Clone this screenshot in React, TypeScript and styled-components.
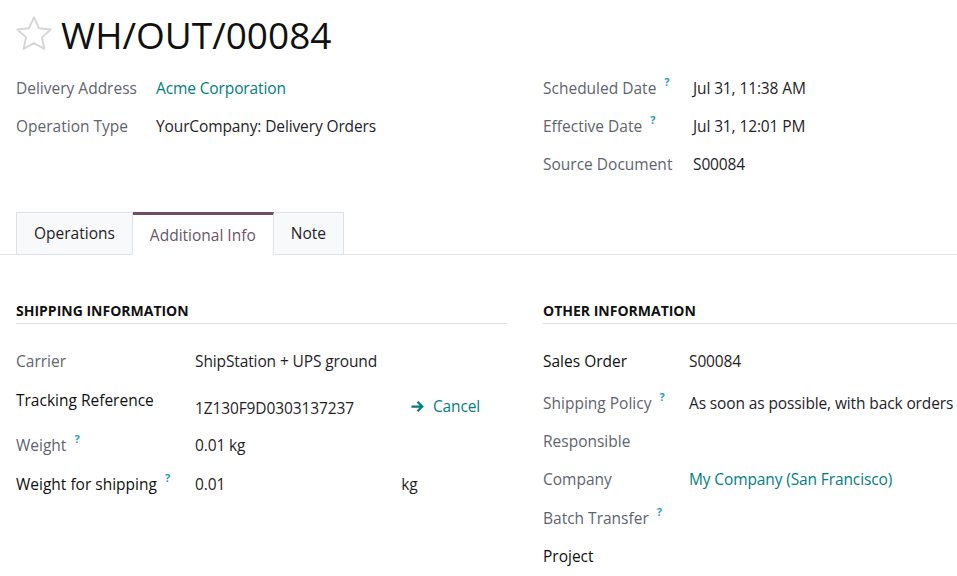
import React from 'react';
import styled, { createGlobalStyle } from 'styled-components';

const TEAL = '#017e84';
const HINT = '#1f9ac4';
const MUTED = '#5f6470';
const INK = '#1f2329';
const BORDER = '#dee2e6';
const BRAND = '#714b67';

const GlobalStyle = createGlobalStyle`
  body {
    margin: 0;
    background: #ffffff;
    color: ${INK};
    font-family: "Open Sans", "Noto Sans", sans-serif;
    font-size: 15.5px;
    overflow: hidden;
  }
`;

const Sheet = styled.div`
  width: 957px;
  height: 576px;
  overflow: hidden;
`;

const TitleRow = styled.div`
  align-items: center;
  display: flex;
  gap: 9px;
  height: 50px;
  padding: 9px 16px 0;
`;

const Title = styled.h1`
  color: #111111;
  font-size: 37px;
  font-weight: 500;
  margin: 0;
`;

const HeaderGrid = styled.div`
  display: grid;
  gap: 36px;
  grid-template-columns: 491px 1fr;
  padding: 18px 0 0 16px;
`;

const Group = styled.div`
  display: flex;
  flex-direction: column;
`;

const Row = styled.div<{ $labelWidth: number; $height?: number }>`
  align-items: flex-start;
  display: grid;
  grid-template-columns: ${(p) => p.$labelWidth}px 1fr;
  min-height: ${(p) => p.$height ?? 38}px;
`;

const Label = styled.div<{ $strong?: boolean }>`
  color: ${(p) => (p.$strong ? '#111111' : MUTED)};
  font-weight: ${(p) => (p.$strong ? 500 : 400)};
  line-height: 22px;
  white-space: nowrap;
`;

const Hint = styled.span`
  color: ${HINT};
  font-size: 11px;
  font-weight: 700;
  margin-left: 8px;
  position: relative;
  top: -8px;
`;

const Value = styled.div<{ $link?: boolean; $offset?: number }>`
  color: ${(p) => (p.$link ? TEAL : INK)};
  letter-spacing: -0.12px;
  line-height: 22px;
  padding-top: ${(p) => p.$offset ?? 0}px;
  white-space: nowrap;
`;

const Tabs = styled.div`
  border-bottom: 1px solid ${BORDER};
  display: flex;
  margin-top: 21px;
  padding-left: 16px;
`;

const Tab = styled.div<{ $active?: boolean }>`
  background: ${(p) => (p.$active ? '#ffffff' : '#f8f9fa')};
  border: 1px solid ${BORDER};
  border-bottom: none;
  border-top: ${(p) => (p.$active ? `3px solid ${BRAND}` : `1px solid ${BORDER}`)};
  color: ${(p) => (p.$active ? '#6a5566' : INK)};
  height: ${(p) => (p.$active ? 40 : 41)}px;
  line-height: 40px;
  margin-bottom: ${(p) => (p.$active ? -1 : 0)}px;
  padding: 0 17px;
  & + & {
    border-left: none;
  }
`;

const Sections = styled.div`
  display: grid;
  gap: 36px;
  grid-template-columns: 491px 1fr;
  padding: 46px 0 0 16px;
`;

const SectionTitle = styled.div`
  border-bottom: 1px solid ${BORDER};
  color: #111111;
  font-size: 14px;
  font-weight: 700;
  line-height: 20px;
  margin-bottom: 26px;
  padding-bottom: 2px;
  text-transform: uppercase;
`;

const InlineValues = styled.div<{ $gap: number }>`
  align-items: baseline;
  display: flex;
  gap: ${(p) => p.$gap}px;
`;

const ActionLink = styled.span`
  align-items: center;
  color: ${TEAL};
  display: inline-flex;
  gap: 8px;
`;

const Star = () => (
  <svg width="36" height="36" viewBox="2 2 20 20" fill="none">
    <path
      d="M12 2.8l2.75 5.95 6.5.72-4.85 4.4 1.35 6.4L12 17l-5.75 3.27 1.35-6.4-4.85-4.4 6.5-.72z"
      stroke="#d6d6d6"
      strokeWidth="1.1"
      strokeLinejoin="round"
    />
  </svg>
);

const Arrow = () => (
  <svg width="15" height="15" viewBox="0 0 16 16">
    <path d="M1.5 8h11M8 3 13 8 8 13" stroke={TEAL} strokeWidth="2.4" fill="none" />
  </svg>
);

const App: React.FC = () => {
  return (
    <Sheet>
      <GlobalStyle />
      <TitleRow>
        <Star />
        <Title>WH/OUT/00084</Title>
      </TitleRow>

      <HeaderGrid>
        <Group>
          <Row $labelWidth={140}>
            <Label>Delivery Address</Label>
            <Value $link>Acme Corporation</Value>
          </Row>
          <Row $labelWidth={140}>
            <Label>Operation Type</Label>
            <Value>YourCompany: Delivery Orders</Value>
          </Row>
        </Group>
        <Group>
          <Row $labelWidth={150}>
            <Label>
              Scheduled Date<Hint>?</Hint>
            </Label>
            <Value>Jul 31, 11:38 AM</Value>
          </Row>
          <Row $labelWidth={150}>
            <Label>
              Effective Date<Hint>?</Hint>
            </Label>
            <Value>Jul 31, 12:01 PM</Value>
          </Row>
          <Row $labelWidth={150}>
            <Label>Source Document</Label>
            <Value>S00084</Value>
          </Row>
        </Group>
      </HeaderGrid>

      <Tabs>
        <Tab>Operations</Tab>
        <Tab $active>Additional Info</Tab>
        <Tab>Note</Tab>
      </Tabs>

      <Sections>
        <Group>
          <SectionTitle>Shipping Information</SectionTitle>
          <Row $labelWidth={179} $height={39}>
            <Label>Carrier</Label>
            <Value>ShipStation + UPS ground</Value>
          </Row>
          <Row $labelWidth={179} $height={45}>
            <Label $strong>Tracking Reference</Label>
            <Value $offset={6}>
              <InlineValues $gap={56}>
                <span>1Z130F9D0303137237</span>
                <ActionLink>
                  <Arrow />
                  Cancel
                </ActionLink>
              </InlineValues>
            </Value>
          </Row>
          <Row $labelWidth={179} $height={39}>
            <Label>
              Weight<Hint>?</Hint>
            </Label>
            <Value>0.01 kg</Value>
          </Row>
          <Row $labelWidth={179} $height={39}>
            <Label $strong>
              Weight for shipping<Hint>?</Hint>
            </Label>
            <Value>
              <InlineValues $gap={176}>
                <span>0.01</span>
                <span>kg</span>
              </InlineValues>
            </Value>
          </Row>
        </Group>
        <Group>
          <SectionTitle>Other Information</SectionTitle>
          <Row $labelWidth={146} $height={42}>
            <Label $strong>Sales Order</Label>
            <Value>S00084</Value>
          </Row>
          <Row $labelWidth={146}>
            <Label>
              Shipping Policy<Hint>?</Hint>
            </Label>
            <Value>As soon as possible, with back orders</Value>
          </Row>
          <Row $labelWidth={146}>
            <Label>Responsible</Label>
            <Value />
          </Row>
          <Row $labelWidth={146} $height={39}>
            <Label>Company</Label>
            <Value $link>My Company (San Francisco)</Value>
          </Row>
          <Row $labelWidth={146}>
            <Label>
              Batch Transfer<Hint>?</Hint>
            </Label>
            <Value />
          </Row>
          <Row $labelWidth={146}>
            <Label $strong>Project</Label>
            <Value />
          </Row>
        </Group>
      </Sections>
    </Sheet>
  );
};

export default App;
